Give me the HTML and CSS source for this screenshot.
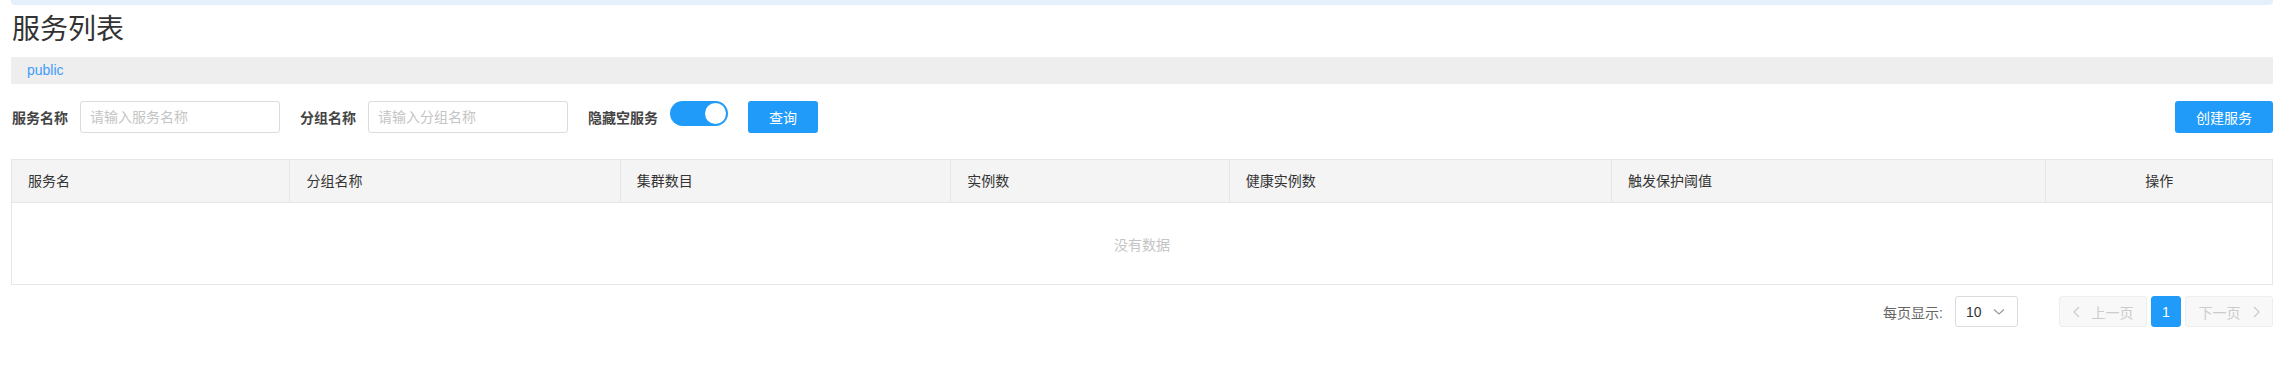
FILE: index.html
```html
<!DOCTYPE html>
<html lang="zh-CN">
<head>
    <meta charset="UTF-8">
    <title>服务列表</title>
    <link rel="stylesheet" href="styles.css">
</head>
<body>
    <div class="page">
        <div class="top-strip"></div>
        <h1 class="page-title">服务列表</h1>
        <div class="namespace-bar">
            <a href="#" class="namespace">public</a>
        </div>

        <div class="filters">
            <label class="filter-label">服务名称</label>
            <input class="filter-input" type="text" placeholder="请输入服务名称">
            <label class="filter-label">分组名称</label>
            <input class="filter-input" type="text" placeholder="请输入分组名称">
            <label class="filter-label">隐藏空服务</label>
            <span class="switch"><span class="switch-knob"></span></span>
            <button class="btn btn-query">查询</button>
            <span class="spacer"></span>
            <button class="btn btn-create">创建服务</button>
        </div>

        <table class="service-table">
            <thead>
                <tr>
                    <th>服务名</th>
                    <th>分组名称</th>
                    <th>集群数目</th>
                    <th>实例数</th>
                    <th>健康实例数</th>
                    <th>触发保护阈值</th>
                    <th class="center">操作</th>
                </tr>
            </thead>
            <tbody>
                <tr>
                    <td class="empty" colspan="7">没有数据</td>
                </tr>
            </tbody>
        </table>

        <div class="pager">
            <span class="pager-label">每页显示:</span>
            <span class="page-size">
                10
                <svg width="12" height="8" viewBox="0 0 12 8"><polyline points="1,1.5 6,6 11,1.5" fill="none" stroke="#999" stroke-width="1.2"/></svg>
            </span>
            <button class="page-btn page-nav" disabled>
                <svg width="7" height="12" viewBox="0 0 7 12"><polyline points="6,1 1,6 6,11" fill="none" stroke="#ccc" stroke-width="1.3"/></svg>
                上一页
            </button>
            <button class="page-btn page-current">1</button>
            <button class="page-btn page-nav" disabled>
                下一页
                <svg width="7" height="12" viewBox="0 0 7 12"><polyline points="1,1 6,6 1,11" fill="none" stroke="#ccc" stroke-width="1.3"/></svg>
            </button>
        </div>
    </div>
</body>
</html>
```

FILE: styles.css
```css
body {
    margin: 0;
    padding: 0;
    background: #ffffff;
    color: #333333;
    font-family: "Liberation Sans", "Noto Sans CJK SC", sans-serif;
    font-size: 14px;
}
.page {
    padding: 0 7px 0 11px;
}
.top-strip {
    height: 5px;
    background: #e4f1fd;
    border-radius: 0 0 4px 4px;
}
.page-title {
    margin: 11px 0 0 1px;
    font-size: 28px;
    font-weight: normal;
    line-height: 28px;
    color: #333333;
}
.namespace-bar {
    margin-top: 13px;
    height: 27px;
    line-height: 27px;
    background: #eeeeee;
    padding-left: 16px;
}
.namespace {
    color: #3f9cf9;
    text-decoration: none;
    font-size: 14px;
}
.filters {
    margin-top: 17px;
    display: flex;
    align-items: center;
    height: 32px;
}
.filter-label {
    font-weight: bold;
    color: #444444;
    margin-right: 12px;
    margin-left: 20px;
    white-space: nowrap;
}
.filter-label:first-child {
    margin-left: 1px;
}
.filter-input {
    width: 200px;
    height: 32px;
    box-sizing: border-box;
    border: 1px solid #dcdcdc;
    border-radius: 3px;
    padding: 0 9px;
    font-family: inherit;
    font-size: 14px;
    outline: none;
}
.filter-input::placeholder {
    color: #c4c4c4;
}
.switch {
    align-self: flex-start;
    position: relative;
    width: 58px;
    height: 25px;
    border-radius: 13px;
    background: #209bfa;
    box-sizing: border-box;
}
.switch-knob {
    position: absolute;
    right: 2px;
    top: 2px;
    width: 21px;
    height: 21px;
    border-radius: 50%;
    background: #ffffff;
}
.btn {
    height: 32px;
    border: none;
    border-radius: 3px;
    background: #209bfa;
    color: #ffffff;
    font-family: inherit;
    font-size: 14px;
    cursor: pointer;
}
.btn-query {
    width: 70px;
    margin-left: 20px;
}
.btn-create {
    width: 98px;
}
.spacer {
    flex: 1;
}
.service-table {
    margin-top: 26px;
    width: 100%;
    border-collapse: collapse;
    border: 1px solid #e6e6e6;
}
.service-table th {
    background: #f4f4f4;
    border: 1px solid #e6e6e6;
    padding: 11px 16px;
    line-height: 20px;
    font-weight: normal;
    text-align: left;
    color: #333333;
    white-space: nowrap;
}
.service-table th.center {
    text-align: center;
}
.service-table td.empty {
    height: 82px;
    padding: 0;
    text-align: center;
    color: #c4c4c4;
    box-sizing: border-box;
}
.pager {
    margin-top: 11px;
    display: flex;
    justify-content: flex-end;
    align-items: center;
}
.pager-label {
    color: #666666;
    margin-right: 12px;
}
.page-size {
    display: flex;
    align-items: center;
    justify-content: space-between;
    width: 63px;
    height: 31px;
    box-sizing: border-box;
    border: 1px solid #dcdcdc;
    border-radius: 3px;
    padding: 0 12px 0 10px;
    color: #333333;
}
.page-btn {
    height: 31px;
    box-sizing: border-box;
    border: 1px solid #eeeeee;
    border-radius: 3px;
    background: #f8f8f8;
    color: #cccccc;
    font-family: inherit;
    font-size: 14px;
    display: flex;
    align-items: center;
    justify-content: center;
    gap: 12px;
    padding: 0;
}
.page-nav {
    width: 88px;
}
.page-btn:first-of-type {
    margin-left: 41px;
}
.page-current {
    width: 30px;
    margin: 0 4px;
    background: #209bfa;
    border-color: #209bfa;
    color: #ffffff;
}
```
